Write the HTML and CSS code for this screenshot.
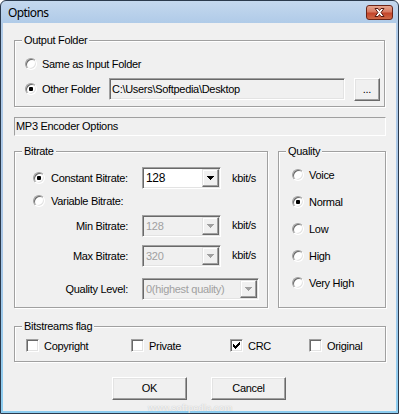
FILE: index.html
```html
<!DOCTYPE html>
<html>
<head>
<meta charset="utf-8">
<title>Options</title>
<link rel="stylesheet" href="styles.css">
</head>
<body>
<div class="window">
  <div class="titlebar">
    <span class="title">Options</span>
    <span class="close">
      <svg width="27" height="15" viewBox="0 0 27 15">
        <path d="M9 3.5h3l1.5 2 1.5-2h3l-3 4 3 4h-3l-1.5-2-1.5 2h-3l3-4z" fill="#fff" stroke="#5a1a10" stroke-width="1"/>
      </svg>
    </span>
  </div>
  <div class="client">
    <div class="group g-output">
      <div class="group-label">Output Folder</div>
      <div class="out-body">
        <div class="out-row">
          <span class="radio"></span><span class="txt">Same as Input Folder</span>
        </div>
        <div class="out-row">
          <span class="radio-label"><span class="radio checked"></span><span class="txt">Other Folder</span></span>
          <div class="field path">C:\Users\Softpedia\Desktop</div>
          <div class="btn browse">...</div>
        </div>
      </div>
    </div>

    <div class="panel">MP3 Encoder Options</div>

    <div class="split">
      <div class="group g-bitrate">
        <div class="group-label">Bitrate</div>
        <div class="br-body">
          <div class="br-row r1">
            <span class="cell"><span class="radio checked"></span><span class="txt">Constant Bitrate:</span></span>
            <div class="combo w79"><span class="combo-text">128</span><span class="combo-btn"><svg width="7" height="4" viewBox="0 0 7 4"><path d="M0 0h7v1h-1v1h-1v1h-1v1h-1v-1h-1v-1h-1v-1h-1z" fill="#000"/></svg></span></div>
            <span class="unit">kbit/s</span>
          </div>
          <div class="br-row r2">
            <span class="cell"><span class="radio"></span><span class="txt">Variable Bitrate:</span></span>
          </div>
          <div class="br-row r3">
            <span class="cell right">Min Bitrate:</span>
            <div class="combo w79 disabled"><span class="combo-text">128</span><span class="combo-btn"><svg width="7" height="4" viewBox="0 0 7 4"><path d="M0 0h7v1h-1v1h-1v1h-1v1h-1v-1h-1v-1h-1v-1h-1z" fill="#a0a0a0"/></svg></span></div>
            <span class="unit up">kbit/s</span>
          </div>
          <div class="br-row r4">
            <span class="cell right">Max Bitrate:</span>
            <div class="combo w79 disabled"><span class="combo-text">320</span><span class="combo-btn"><svg width="7" height="4" viewBox="0 0 7 4"><path d="M0 0h7v1h-1v1h-1v1h-1v1h-1v-1h-1v-1h-1v-1h-1z" fill="#a0a0a0"/></svg></span></div>
            <span class="unit up">kbit/s</span>
          </div>
          <div class="br-row r5">
            <span class="cell right">Quality Level:</span>
            <div class="combo w117 disabled"><span class="combo-text">0(highest quality)</span><span class="combo-btn"><svg width="7" height="4" viewBox="0 0 7 4"><path d="M0 0h7v1h-1v1h-1v1h-1v1h-1v-1h-1v-1h-1v-1h-1z" fill="#a0a0a0"/></svg></span></div>
          </div>
        </div>
      </div>

      <div class="group g-quality">
        <div class="group-label">Quality</div>
        <div class="q-body">
          <div class="q-row"><span class="radio"></span><span class="txt">Voice</span></div>
          <div class="q-row"><span class="radio checked"></span><span class="txt">Normal</span></div>
          <div class="q-row"><span class="radio"></span><span class="txt">Low</span></div>
          <div class="q-row"><span class="radio"></span><span class="txt">High</span></div>
          <div class="q-row"><span class="radio"></span><span class="txt">Very High</span></div>
        </div>
      </div>
    </div>

    <div class="group g-flags">
      <div class="group-label">Bitstreams flag</div>
      <div class="flags-body">
        <span class="flag f1"><span class="check"></span><span class="txt">Copyright</span></span>
        <span class="flag f2"><span class="check"></span><span class="txt">Private</span></span>
        <span class="flag f3"><span class="check"><svg width="9" height="9" viewBox="0 0 9 9"><path d="M1 3h1v1h1v1h1v-1h1v-1h1v-1h1v-1h1v3h-1v1h-1v1h-1v1h-1v1h-1v-1h-1v-1h-1z" fill="#000"/></svg></span><span class="txt">CRC</span></span>
        <span class="flag f4"><span class="check"></span><span class="txt">Original</span></span>
      </div>
    </div>

    <div class="buttons">
      <div class="btn push">OK</div>
      <div class="btn push">Cancel</div>
    </div>
  </div>
  <div class="wm-url">www.softpedia.com</div>
</div>
</body>
</html>
```

FILE: styles.css
```css
html, body {
  margin: 0;
  padding: 0;
  background: #fff;
}

.window {
  position: relative;
  width: 399px;
  height: 414px;
  box-sizing: border-box;
  border: 1px solid #2b3a4d;
  border-radius: 6px 6px 0 0;
  background: linear-gradient(#c4d8ee 0px, #b0cbe8 22px, #a9c6e6 60%, #8ccdf0 100%);
  display: flex;
  flex-direction: column;
  overflow: hidden;
  font-family: "Liberation Sans", Arial, sans-serif;
  font-size: 11px;
  letter-spacing: -0.3px;
  color: #000;
}

.titlebar {
  height: 22px;
  flex: none;
  display: flex;
  align-items: flex-start;
  justify-content: space-between;
}

.title {
  font-family: "Noto Sans", "Open Sans", sans-serif;
  font-size: 12px;
  letter-spacing: -0.6px;
  line-height: 22px;
  padding-left: 7px;
  padding-top: 1px;
  color: #000;
}

.close {
  width: 27px;
  height: 15px;
  margin-top: 4px;
  margin-right: 5px;
  box-sizing: border-box;
  border: 1px solid #6b2418;
  border-radius: 3px;
  background: linear-gradient(#e6a58f 0%, #d77a62 45%, #c3442a 55%, #cf6a48 100%);
  display: flex;
  overflow: hidden;
}
.close svg {
  margin: -1px;
}

.client {
  flex: 1;
  margin: 0 2px 2px 2px;
  background: #f0f0f0;
  padding: 17px 0 0 11px;
  display: flex;
  flex-direction: column;
  align-items: flex-start;
}

.txt {
  white-space: nowrap;
}

/* Group boxes */
.group {
  box-sizing: border-box;
  border: 1px solid #a0a0a0;
  box-shadow: 1px 1px 0 #fff, inset 1px 1px 0 #fff;
  display: flex;
  flex-direction: column;
}

.group-label {
  width: max-content;
  margin: -7px 0 0 7px;
  padding: 0 2px;
  height: 13px;
  line-height: 13px;
  background: #f0f0f0;
  white-space: nowrap;
}

.g-output {
  width: 371px;
}

.out-body {
  margin-top: 5px;
  padding: 0 0 5px 10px;
  display: flex;
  flex-direction: column;
  gap: 1px;
}

.out-row {
  height: 24px;
  display: flex;
  align-items: center;
  gap: 5px;
}
.out-row:nth-child(2) {
  gap: 0;
}

.radio-label {
  width: 84px;
  display: flex;
  align-items: center;
  gap: 5px;
}

/* Classic radio */
.radio {
  position: relative;
  flex: none;
  width: 12px;
  height: 12px;
  box-sizing: border-box;
  border-radius: 50%;
  background: #fff;
  border: 1px solid;
  border-color: #a0a0a0 #fff #fff #a0a0a0;
  box-shadow: inset 1px 1px 0 #696969, inset -1px -1px 0 #e3e3e3;
}
.radio.checked::after {
  content: "";
  position: absolute;
  left: 3px;
  top: 3px;
  width: 4px;
  height: 4px;
  border-radius: 1px;
  background: #000;
}

/* Classic checkbox */
.check {
  flex: none;
  width: 13px;
  height: 13px;
  box-sizing: border-box;
  background: #fff;
  border: 1px solid;
  border-color: #a0a0a0 #fff #fff #a0a0a0;
  box-shadow: inset 1px 1px 0 #696969, inset -1px -1px 0 #e3e3e3;
  padding: 1px;
  display: flex;
}
.check svg {
  display: block;
}

/* Sunken field */
.field {
  box-sizing: border-box;
  border: 1px solid;
  border-color: #a0a0a0 #fff #fff #a0a0a0;
  box-shadow: inset 1px 1px 0 #696969, inset -1px -1px 0 #e3e3e3;
}
.path {
  width: 236px;
  height: 22px;
  background: #f0f0f0;
  padding-left: 2px;
  line-height: 20px;
  white-space: nowrap;
  overflow: hidden;
}

/* Raised buttons */
.btn {
  box-sizing: border-box;
  border: 1px solid;
  border-color: #fff #696969 #696969 #fff;
  box-shadow: inset -1px -1px 0 #a0a0a0, inset 1px 1px 0 #e3e3e3;
  background: #f0f0f0;
  display: flex;
  align-items: center;
  justify-content: center;
}
.browse {
  width: 26px;
  height: 23px;
  margin-left: 9px;
  padding-bottom: 1px;
}

.panel {
  margin-top: 10px;
  width: 372px;
  height: 19px;
  box-sizing: border-box;
  border: 1px solid;
  border-color: #a0a0a0 #fff #fff #a0a0a0;
  padding-left: 1px;
  line-height: 17px;
}

.split {
  margin-top: 15px;
  display: flex;
  gap: 10px;
}

.g-bitrate {
  width: 254px;
}
.g-quality {
  width: 108px;
}

.br-body {
  margin-top: 9px;
  padding: 0 0 7px 18px;
  display: flex;
  flex-direction: column;
}

.br-row {
  height: 22px;
  display: flex;
  align-items: center;
}
.br-row.r2 { margin-top: 1px; }
.br-row.r3 { margin-top: 3px; }
.br-row.r4 { margin-top: 8px; }
.br-row.r5 { margin-top: 11px; }

.cell {
  width: 109px;
  flex: none;
  display: flex;
  align-items: center;
  gap: 6px;
  box-sizing: border-box;
}
.cell.right {
  justify-content: flex-end;
  padding-right: 14px;
  white-space: nowrap;
}

.combo {
  height: 22px;
  box-sizing: border-box;
  border: 1px solid;
  border-color: #a0a0a0 #fff #fff #a0a0a0;
  box-shadow: inset 1px 1px 0 #696969, inset -1px -1px 0 #e3e3e3;
  padding: 1px;
  background: #fff;
  display: flex;
}
.combo.w79 { width: 79px; }
.combo.w117 { width: 117px; }
.combo.disabled {
  background: #f0f0f0;
  color: #a0a0a0;
}
.combo-text {
  flex: 1;
  padding-left: 2px;
  line-height: 18px;
  white-space: nowrap;
  overflow: hidden;
}
.w79:not(.disabled) .combo-text {
  font-size: 12px;
}
.combo-btn {
  width: 17px;
  height: 18px;
  box-sizing: border-box;
  border: 1px solid;
  border-color: #e3e3e3 #696969 #696969 #e3e3e3;
  box-shadow: inset -1px -1px 0 #a0a0a0, inset 1px 1px 0 #fff;
  background: #f0f0f0;
  display: flex;
  align-items: center;
  justify-content: center;
}
.combo-btn svg {
  display: block;
  margin-left: 0;
}

.unit {
  margin-left: 11px;
  white-space: nowrap;
}
.unit.up {
  margin-top: -3px;
}

.q-body {
  margin-top: 3px;
  padding: 0 0 0 13px;
  display: flex;
  flex-direction: column;
}
.q-row {
  height: 27px;
  display: flex;
  align-items: center;
  gap: 5px;
}

.g-flags {
  margin-top: 18px;
  width: 372px;
}
.flags-body {
  margin-top: 6px;
  padding: 0 0 9px 11px;
  display: flex;
  height: 13px;
}
.flag {
  display: flex;
  align-items: center;
  gap: 5px;
  height: 13px;
}
.f1 { width: 105px; }
.f2 { width: 99px; }
.f3 { width: 79px; }

.buttons {
  margin-top: 15px;
  align-self: stretch;
  margin-left: -11px;
  display: flex;
  justify-content: center;
  gap: 24px;
  padding-right: 1px;
}
.push {
  width: 75px;
  height: 23px;
  line-height: 21px;
}

/* Softpedia watermark overlay */
.wm-url {
  position: absolute;
  left: 147px;
  top: 402px;
  font-family: "Liberation Sans", sans-serif;
  font-weight: bold;
  font-size: 9px;
  letter-spacing: 0;
  color: rgba(255, 255, 255, 0.75);
  text-shadow: 0 0 1px rgba(100, 100, 100, 0.4);
  pointer-events: none;
}
```
